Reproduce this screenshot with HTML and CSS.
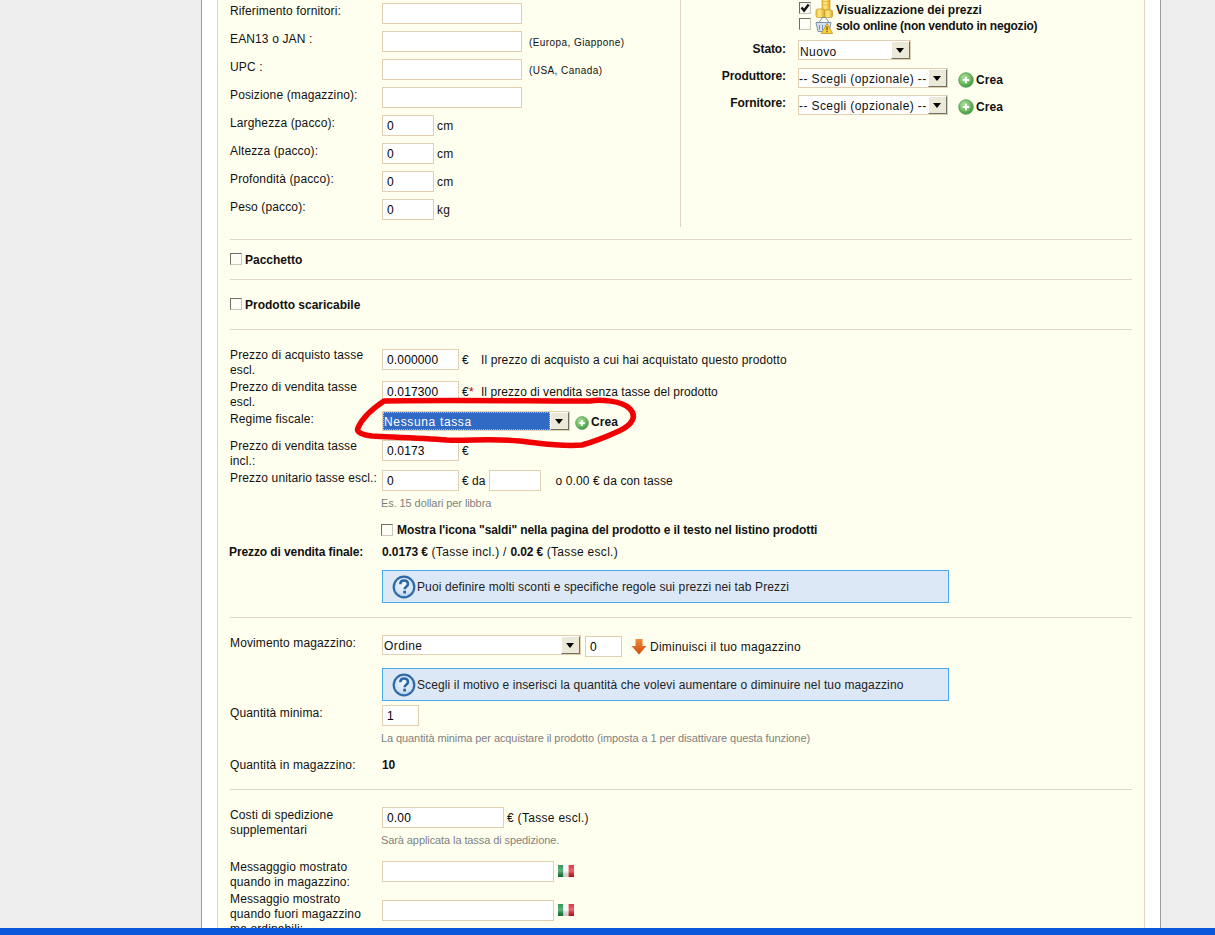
FILE: index.html
```html
<!DOCTYPE html>
<html lang="it">
<head>
<meta charset="utf-8">
<title>Prodotto</title>
<link rel="stylesheet" href="styles.css">
</head>
<body>
<svg class="defs" width="0" height="0" aria-hidden="true">
  <defs>
    <radialGradient id="greenBall" cx="40%" cy="35%" r="70%">
      <stop offset="0" stop-color="#b5e0a5"/><stop offset="0.6" stop-color="#6dbb62"/><stop offset="1" stop-color="#3b8f3f"/>
    </radialGradient>
    <radialGradient id="blueBall" cx="50%" cy="40%" r="65%">
      <stop offset="0" stop-color="#f4f9fe"/><stop offset="0.7" stop-color="#cfe2f5"/><stop offset="1" stop-color="#8fb6dc"/>
    </radialGradient>
    <linearGradient id="coin" x1="0" x2="1" y1="0" y2="0">
      <stop offset="0" stop-color="#f3c93f"/><stop offset="0.45" stop-color="#fde98c"/><stop offset="1" stop-color="#e2a91c"/>
    </linearGradient>
    <linearGradient id="arrowFill" x1="0" x2="0" y1="0" y2="1">
      <stop offset="0" stop-color="#f08a3c"/><stop offset="1" stop-color="#cf4a08"/>
    </linearGradient>
    <linearGradient id="flagShade" x1="0" x2="0" y1="0" y2="1">
      <stop offset="0" stop-color="#fff" stop-opacity=".15"/><stop offset="0.5" stop-color="#fff" stop-opacity=".35"/><stop offset="1" stop-color="#000" stop-opacity=".15"/>
    </linearGradient>
    <symbol id="i-plus" viewBox="0 0 16 16">
      <circle cx="8" cy="8" r="7.3" fill="url(#greenBall)" stroke="#4f9e52" stroke-width=".8"/>
      <path d="M8 4.800v6.400M4.800 8h6.400" stroke="#fff" stroke-width="2"/>
    </symbol>
    <symbol id="i-help" viewBox="0 0 24 24">
      <circle cx="12" cy="12" r="10.3" fill="url(#blueBall)" stroke="#2f6ba8" stroke-width="2.2"/>
      <path d="M8.300 9.300c0-5 7.700-5 7.700-.4 0 2.800-3.400 2.900-3.400 5.400" fill="none" stroke="#2a66a6" stroke-width="2.600"/>
      <rect x="11.200" y="15.700" width="2.800" height="2.800" fill="#2a66a6"/>
    </symbol>
    <symbol id="i-flag" viewBox="0 0 16 12">
      <rect width="5.400" height="12" fill="#11843a"/>
      <rect x="5.400" width="5.200" height="12" fill="#f4f4f4"/>
      <rect x="10.600" width="5.400" height="12" fill="#e0141e"/>
      <rect width="16" height="12" fill="url(#flagShade)"/>
    </symbol>
  </defs>
</svg>

<div class="stage">
  <main class="panel">
    <section class="box">

      <div class="top">
        <div class="top-left">
          <div class="row r28"><span class="lab">Riferimento fornitori:</span><span class="fld"><input class="in w140" type="text"></span></div>
          <div class="row r28"><span class="lab">EAN13 o JAN :</span><span class="fld"><input class="in w140" type="text"><small class="tiny">(Europa, Giappone)</small></span></div>
          <div class="row r28"><span class="lab">UPC :</span><span class="fld"><input class="in w140" type="text"><small class="tiny">(USA, Canada)</small></span></div>
          <div class="row r28"><span class="lab">Posizione (magazzino):</span><span class="fld"><input class="in w140" type="text"></span></div>
          <div class="row r28"><span class="lab">Larghezza (pacco):</span><span class="fld"><input class="in w52" type="text" value="0"><span class="unit">cm</span></span></div>
          <div class="row r28"><span class="lab">Altezza (pacco):</span><span class="fld"><input class="in w52" type="text" value="0"><span class="unit">cm</span></span></div>
          <div class="row r28"><span class="lab">Profondità (pacco):</span><span class="fld"><input class="in w52" type="text" value="0"><span class="unit">cm</span></span></div>
          <div class="row r28"><span class="lab">Peso (pacco):</span><span class="fld"><input class="in w52" type="text" value="0"><span class="unit">kg</span></span></div>
        </div>
        <div class="top-right">
          <div class="opt">
            <span class="cb"><svg viewBox="0 0 10 10" width="10" height="10"><path d="M1.500 4.500l2.600 3L8.700 1.500" fill="none" stroke="#111" stroke-width="2.400"/></svg></span>
            <svg class="opt-ico" viewBox="0 0 18 18" width="18" height="18"><rect x="7" y="-2" width="8" height="12" rx="1.500" fill="url(#coin)" stroke="#c39518" stroke-width=".7"/><path d="M7 1.500h8M7 5h8" stroke="#d9aa2b" stroke-width=".6"/><rect x="1" y="9" width="8.500" height="8.500" rx="1.800" fill="url(#coin)" stroke="#c39518" stroke-width=".7"/><rect x="9.500" y="10" width="8" height="7.500" rx="1.800" fill="url(#coin)" stroke="#c39518" stroke-width=".7"/></svg>
            <b>Visualizzazione dei prezzi</b>
          </div>
          <div class="opt">
            <span class="cb cb-light"></span>
            <svg class="opt-ico" viewBox="0 0 18 18" width="18" height="18"><path d="M1 6.500h15l-1.800 9H3z" fill="#d5e0ec" stroke="#5d7f9f" stroke-width=".8"/><path d="M4 6.500l3.500-5h3l3.500 5M4.500 9v5M7.500 9v5M10.500 9v3" fill="none" stroke="#6d8aa8" stroke-width=".9"/><path d="M12 7.500l5.700 10H6.300z" fill="#f8cf3d" stroke="#b5881a" stroke-width=".7"/><path d="M12 10.500v3.700M12 15v1.300" stroke="#5a3c08" stroke-width="1.100"/></svg>
            <b class="b-tight">solo online (non venduto in negozio)</b>
          </div>
          <div class="side-row side-stato">
            <b class="side-lab">Stato:</b>
            <div class="sel w113"><span class="sel-txt">Nuovo</span><span class="sel-btn"></span></div>
          </div>
          <div class="side-row">
            <b class="side-lab">Produttore:</b>
            <div class="sel w150"><span class="sel-txt">-- Scegli (opzionale) --</span><span class="sel-btn"></span></div>
            <span class="crea side-crea"><svg class="plus" width="16" height="16"><use href="#i-plus"/></svg><b>Crea</b></span>
          </div>
          <div class="side-row">
            <b class="side-lab">Fornitore:</b>
            <div class="sel w150"><span class="sel-txt">-- Scegli (opzionale) --</span><span class="sel-btn"></span></div>
            <span class="crea side-crea"><svg class="plus" width="16" height="16"><use href="#i-plus"/></svg><b>Crea</b></span>
          </div>
        </div>
      </div>

      <hr class="rule rule-first">
      <div class="toggle t39"><span class="cb cb-light"></span><b>Pacchetto</b></div>
      <hr class="rule">
      <div class="toggle t49"><span class="cb cb-light"></span><b>Prodotto scaricabile</b></div>
      <hr class="rule">

      <div class="group g-price">
        <div class="row r32"><span class="lab">Prezzo di acquisto tasse escl.</span><span class="fld fld-low"><input class="in w77" type="text" value="0.000000"><span class="eur">€</span><span class="note n-acq">Il prezzo di acquisto a cui hai acquistato questo prodotto</span></span></div>
        <div class="row r32"><span class="lab">Prezzo di vendita tasse escl.</span><span class="fld fld-low"><input class="in w77" type="text" value="0.017300"><span class="eur">€<i class="req">*</i></span><span class="note n-ven">Il prezzo di vendita senza tasse del prodotto</span></span></div>
        <div class="row r27"><span class="lab">Regime fiscale:</span><span class="fld"><div class="sel w188 sel-on"><span class="sel-txt">Nessuna tassa</span><span class="sel-btn"></span></div><span class="crea tax-crea"><svg class="plus" width="14" height="14"><use href="#i-plus"/></svg><b>Crea</b></span></span></div>
        <div class="row r32"><span class="lab">Prezzo di vendita tasse incl.:</span><span class="fld fld-low"><input class="in w77" type="text" value="0.0173"><span class="eur">€</span></span></div>
        <div class="row r26"><span class="lab lab-wide">Prezzo unitario tasse escl.:</span><span class="fld"><input class="in w77" type="text" value="0"><span class="eur eur-da">€ da</span><input class="in w52 in-da" type="text"><span class="note n-tax">o 0.00 € da con tasse</span></span></div>
        <div class="row r26"><span class="lab"></span><span class="hint">Es. 15 dollari per libbra</span></div>
        <div class="row r22"><span class="lab"></span><span class="fld fld-check"><span class="cb cb-light"></span><b>Mostra l'icona "saldi" nella pagina del prodotto e il testo nel listino prodotti</b></span></div>
        <div class="row r26"><b class="lab lab-final">Prezzo di vendita finale:</b><span class="final"><b>0.0173 €</b> (Tasse incl.) / <b>0.02 €</b> (Tasse escl.)</span></div>
        <div class="row"><span class="lab"></span><div class="info"><svg width="24" height="24"><use href="#i-help"/></svg><span>Puoi definire molti sconti e specifiche regole sui prezzi nei tab Prezzi</span></div></div>
      </div>
      <hr class="rule rule-14">

      <div class="group g-stock">
        <div class="row r33"><span class="lab">Movimento magazzino:</span><span class="fld"><div class="sel w199"><span class="sel-txt">Ordine</span><span class="sel-btn"></span></div><input class="in w37 in-qty" type="text" value="0"><svg class="down" width="16" height="17" viewBox="0 0 16 17"><path d="M4.500 1h7v7h4L8 16.500.5 8h4z" fill="url(#arrowFill)"/></svg><span class="stock-note">Diminuisci il tuo magazzino</span></span></div>
        <div class="row r37"><span class="lab"></span><div class="info"><svg width="24" height="24"><use href="#i-help"/></svg><span>Scegli il motivo e inserisci la quantità che volevi aumentare o diminuire nel tuo magazzino</span></div></div>
        <div class="row r26"><span class="lab">Quantità minima:</span><span class="fld"><input class="in w37" type="text" value="1"></span></div>
        <div class="row r26"><span class="lab"></span><span class="hint">La quantità minima per acquistare il prodotto (imposta a 1 per disattivare questa funzione)</span></div>
        <div class="row r32"><span class="lab">Quantità in magazzino:</span><b class="qty">10</b></div>
      </div>
      <hr class="rule">

      <div class="group g-ship">
        <div class="row r26"><span class="lab">Costi di spedizione supplementari</span><span class="fld"><input class="in w122" type="text" value="0.00"><span class="eur">€ (Tasse escl.)</span></span></div>
        <div class="row r26"><span class="lab"></span><span class="hint">Sarà applicata la tassa di spedizione.</span></div>
        <div class="row r33"><span class="lab">Messagggio mostrato quando in magazzino:</span><span class="fld fld-low"><input class="in w172" type="text"><svg class="flag" width="16" height="12"><use href="#i-flag"/></svg></span></div>
        <div class="row"><span class="lab lab-up">Messaggio mostrato quando fuori magazzino ma ordinabili:</span><span class="fld fld-lower"><input class="in w172" type="text"><svg class="flag" width="16" height="12"><use href="#i-flag"/></svg></span></div>
      </div>

    </section>
  </main>
  <svg class="scribble" width="1215" height="935" viewBox="0 0 1215 935" aria-hidden="true">
    <path d="M384 401 C 440 400 530 401 590 401 C 600 399 622 401 629 408 C 638 416 632 425 619 431 C 606 437 596 441 582 445 C 560 447 540 443 520 441 C 490 438 470 441 447 440 C 420 438 390 437 372 436 C 362 435 356 432 358 428 C 362 418 372 409 384 401 Z" fill="none" stroke="#f00000" stroke-width="5.500" stroke-linejoin="round"/>
  </svg>
</div>
<div class="bar"></div>
</body>
</html>
```

FILE: styles.css
```css
* { box-sizing: border-box; }

html, body {
  margin: 0;
  height: 100%;
  overflow: hidden;
}

body {
  display: flex;
  flex-direction: column;
  background: #eeeeee;
  color: #111;
  font: 12px/15px "Liberation Sans", Arial, sans-serif;
  letter-spacing: .13px;
}

b { letter-spacing: -.1px; }

.defs { position: absolute; }

.stage {
  position: relative;
  flex: 1;
  min-height: 0;
  overflow: hidden;
}

.bar {
  height: 7px;
  flex: none;
  background: #0a57dc;
}

.scribble {
  position: absolute;
  left: 0;
  top: 0;
  pointer-events: none;
}

.panel {
  width: 960px;
  height: 100%;
  margin-left: 201px;
  padding: 0 15px;
  background: #fff;
  border-left: 1px solid #9a9a9a;
  border-right: 1px solid #9a9a9a;
}

.box {
  height: 100%;
  padding: 0 12px;
  background: #fffff0;
  border-left: 1px solid #dfd5c3;
  border-right: 1px solid #dfd5c3;
}

/* top two columns */
.top { display: flex; height: 227px; }

.top-left {
  width: 451px;
  padding-top: 3px;
  border-right: 1px solid #dfd5c3;
}

.top-right { flex: 1; padding-left: 118px; }

.opt {
  display: flex;
  align-items: center;
  height: 15px;
}

.opt:first-child { height: 17px; }
.opt .cb { margin-bottom: 2px; }
.opt .opt-ico { margin: 0 3px 0 4px; flex: none; }
.opt b { padding-top: 3px; letter-spacing: 0; white-space: nowrap; }
.opt .b-tight { letter-spacing: -.22px; }

.side-row {
  display: flex;
  align-items: flex-start;
  height: 27px;
  margin-left: -118px;
}

.side-stato { height: 28px; margin-top: 8px; }
.side-stato .side-lab { padding-top: 2px; }
.side-stato .sel-txt { line-height: 22px; }

.side-lab {
  width: 105px;
  margin-right: 12px;
  padding-top: 1px;
  text-align: right;
}

.side-crea { margin: 4px 0 0 10px; }
.side-crea .plus { margin-right: 1px; }

/* rows */
.row {
  display: grid;
  grid-template-columns: 152px 1fr;
  align-items: start;
}

.r22 { height: 22px; }
.r26 { height: 26px; }
.r27 { height: 27px; }
.r28 { height: 28px; }
.r32 { height: 32px; }
.r33 { height: 33px; }
.r37 { height: 37px; }

.lab { display: block; padding: 1px 8px 0 0; }
.lab-wide { padding-right: 0; white-space: nowrap; }
.lab-final { margin-left: -1px; font-weight: bold; letter-spacing: -.1px; white-space: nowrap; }
.lab-up { padding-top: 0; }

.fld { display: flex; align-items: flex-start; }
.fld-low { padding-top: 2px; }
.fld-lower { padding-top: 8px; }
.fld-check { align-items: center; padding-top: 1px; }

.in {
  height: 21px;
  padding: 2px 4px;
  margin: 0;
  background: #fff;
  border: 1px solid #e0d0b1;
  border-radius: 0;
  color: #000;
  font: 12px "Liberation Sans", Arial, sans-serif;
  letter-spacing: .15px;
  flex: none;
}

.w37 { width: 37px; }
.w52 { width: 52px; }
.w77 { width: 77px; }
.w122 { width: 122px; }
.w140 { width: 140px; }
.w172 { width: 172px; }

.tiny { margin: 5px 0 0 7px; font-size: 10px; letter-spacing: .43px; line-height: 13px; }
.unit { margin: 4px 0 0 3px; }
.eur { margin: 4px 0 0 3px; letter-spacing: .3px; white-space: nowrap; }
.eur-da { letter-spacing: .05px; }
.req { color: #b00; font-style: normal; }
.note { margin-top: 4px; white-space: nowrap; }
.n-acq { margin-left: 12px; letter-spacing: .12px; }
.n-ven { margin-left: 7px; letter-spacing: .06px; }
.n-tax { margin-left: 15px; letter-spacing: .12px; }
.in-da { margin-left: 3px; }
.in-qty { margin: 1px 0 0 4px; }
.hint { margin: 1px 0 0 -1px; color: #7f7f7f; font-size: 11px; letter-spacing: -.09px; line-height: 13px; }
.final { padding-top: 1px; letter-spacing: .3px; white-space: nowrap; }
.qty { padding-top: 1px; font-size: 12px; }

/* select control */
.sel {
  display: flex;
  justify-content: space-between;
  height: 20px;
  background: #fff;
  border: 1px solid #e0d0b1;
  flex: none;
  overflow: hidden;
}

.w113 { width: 113px; }
.w150 { width: 150px; }
.w150 .sel-txt { padding-left: 0; }
.w188 { width: 188px; }
.w199 { width: 199px; }

.sel-txt { padding-left: 1px; line-height: 20px; white-space: nowrap; letter-spacing: .4px; }

.sel-btn {
  position: relative;
  width: 19px;
  height: 18px;
  flex: none;
  background: #ece9d8;
  border: 1px solid;
  border-color: #fff #716f64 #716f64 #fff;
}

.sel-btn::after {
  content: "";
  position: absolute;
  left: 4px;
  top: 6px;
  border-style: solid;
  border-width: 5px 4px 0;
  border-color: #000 transparent transparent;
}

.sel-on { background: #ece9d8; }
.sel-on .sel-txt {
  flex: 1;
  background: #316ac5;
  color: #fff;
  letter-spacing: .65px;
  outline: 1px dotted #e9b454;
  outline-offset: -1px;
}

.crea { display: flex; align-items: center; white-space: nowrap; }
.crea .plus { margin-right: 2px; flex: none; }
.crea b { letter-spacing: .1px; }
.tax-crea { margin: 4px 0 0 5px; }

/* checkbox */
.cb {
  display: inline-flex;
  align-items: center;
  justify-content: center;
  width: 12px;
  height: 12px;
  background: #f6f6ee;
  border: 1px solid;
  border-color: #6e6e66 #c8c8c0 #c8c8c0 #6e6e66;
  flex: none;
}

.cb-light { background: #fdfdf6; }

.toggle {
  display: flex;
  align-items: center;
  gap: 3px;
}

.toggle .cb { margin-bottom: 2px; }
.toggle b { padding-top: 2px; letter-spacing: 0; }

.t39 { height: 39px; }
.t49 { height: 49px; }

.fld-check .cb { margin: -1px 4px 0 -1px; }
.fld-check b { white-space: nowrap; }

/* rules and groups */
.rule {
  height: 1px;
  margin: 0;
  background: #e0d8c4;
  border: 0;
}

.rule-first { margin-top: 12px; }
.rule-14 { margin-top: 14px; }

.g-price, .g-stock, .g-ship { padding-top: 17px; }

/* info note */
.info {
  display: flex;
  align-items: center;
  gap: 1px;
  width: 567px;
  height: 33px;
  padding-left: 9px;
  background: #dce8f6;
  border: 1px solid #4aaaf0;
  color: #222;
  letter-spacing: .12px;
  white-space: nowrap;
}

.info span { padding-top: 1px; }

.down { margin: 3px 3px 0 9px; flex: none; }
.stock-note { margin-top: 5px; letter-spacing: .23px; white-space: nowrap; }
.flag { margin: 4px 0 0 4px; flex: none; }
```
